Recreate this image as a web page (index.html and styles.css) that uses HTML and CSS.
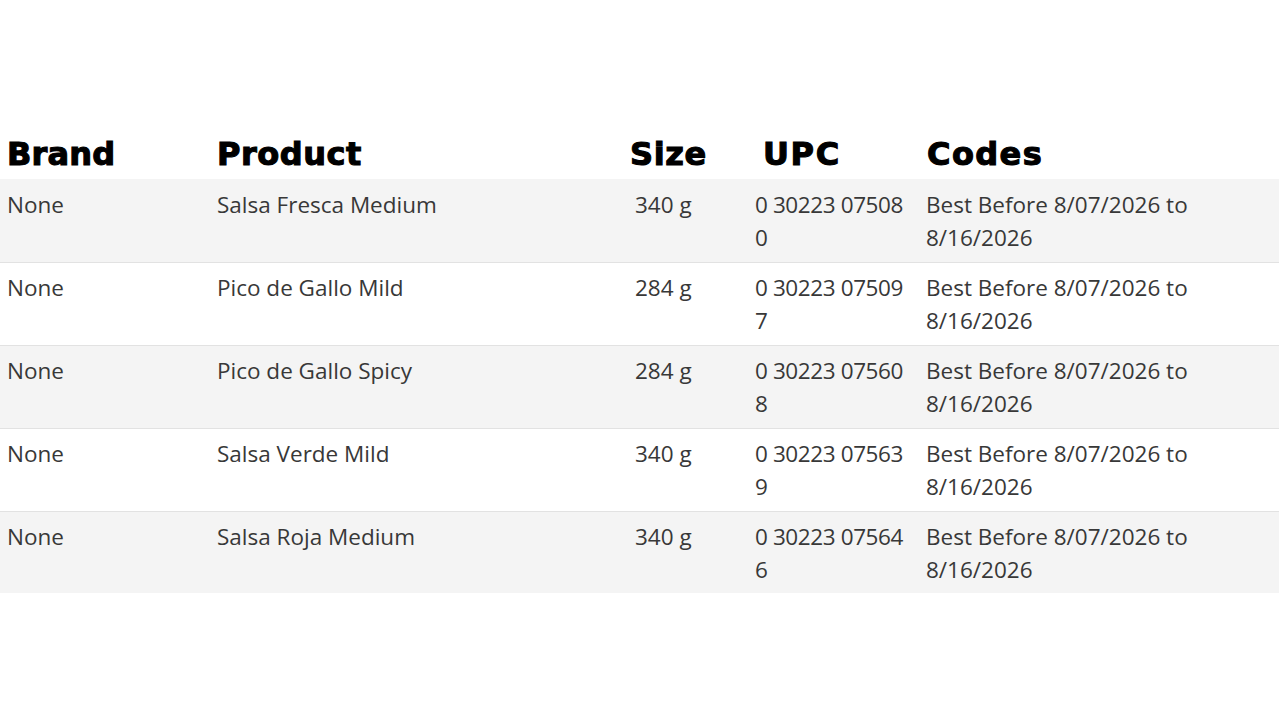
FILE: index.html
```html
<!DOCTYPE html>
<html lang="en">
<head>
<meta charset="utf-8">
<title>Recall products</title>
<link rel="stylesheet" href="styles.css">
</head>
<body>
<main class="page">
  <table class="products">
    <colgroup>
      <col class="c-brand">
      <col class="c-product">
      <col class="c-size">
      <col class="c-upc">
      <col class="c-codes">
    </colgroup>
    <thead>
      <tr>
        <th class="h-brand">Brand</th>
        <th class="h-product">Product</th>
        <th class="h-size">Size</th>
        <th class="h-upc">UPC</th>
        <th class="h-codes">Codes</th>
      </tr>
    </thead>
    <tbody>
      <tr class="odd">
        <td>None</td>
        <td>Salsa Fresca Medium</td>
        <td>340 g</td>
        <td>0 30223 07508 0</td>
        <td>Best Before 8/07/2026 to 8/16/2026</td>
      </tr>
      <tr>
        <td>None</td>
        <td>Pico de Gallo Mild</td>
        <td>284 g</td>
        <td>0 30223 07509 7</td>
        <td>Best Before 8/07/2026 to 8/16/2026</td>
      </tr>
      <tr class="odd">
        <td>None</td>
        <td>Pico de Gallo Spicy</td>
        <td>284 g</td>
        <td>0 30223 07560 8</td>
        <td>Best Before 8/07/2026 to 8/16/2026</td>
      </tr>
      <tr>
        <td>None</td>
        <td>Salsa Verde Mild</td>
        <td>340 g</td>
        <td>0 30223 07563 9</td>
        <td>Best Before 8/07/2026 to 8/16/2026</td>
      </tr>
      <tr class="odd">
        <td>None</td>
        <td>Salsa Roja Medium</td>
        <td>340 g</td>
        <td>0 30223 07564 6</td>
        <td>Best Before 8/07/2026 to 8/16/2026</td>
      </tr>
    </tbody>
  </table>
</main>
</body>
</html>
```

FILE: styles.css
```css
html, body {
  margin: 0;
  padding: 0;
  background: #ffffff;
}

.page {
  padding-top: 134px;
}

.products {
  width: 1279px;
  border-collapse: collapse;
  table-layout: fixed;
  font-family: "Open Sans", "Liberation Sans", sans-serif;
  font-size: 22.5px;
  line-height: 33px;
  color: #383838;
}

.c-brand { width: 210px; }
.c-product { width: 418px; }
.c-size { width: 120px; }
.c-upc { width: 171px; }
.c-codes { width: 360px; }

.products th {
  font-family: "DejaVu Sans", "Liberation Sans", sans-serif;
  font-weight: bold;
  font-size: 32px;
  line-height: 40px;
  letter-spacing: 0.6px;
  color: #000;
  -webkit-text-stroke: 1.1px #000;
  text-align: left;
  padding: 0 0 5px 7px;
  vertical-align: bottom;
}

.products th.h-brand { letter-spacing: 0.2px; }
.products th.h-product { letter-spacing: 0.5px; }
.products th.h-size { padding-left: 2px; }
.products th.h-upc { padding-left: 15px; letter-spacing: 1.6px; }
.products th.h-codes { padding-left: 8px; letter-spacing: 1.4px; }

.products td {
  padding: 8px 7px 8px 7px;
  vertical-align: top;
  font-weight: normal;
}

.products td:nth-child(4) {
  letter-spacing: -0.4px;
}

.products tbody tr {
  border-top: 1px solid #e2e2e2;
}

.products tbody tr:first-child {
  border-top: 0;
}

.products tbody tr:first-child td {
  padding-top: 9px;
}

.products tbody tr:last-child td {
  padding-bottom: 7px;
}

.products tr.odd {
  background: #f4f4f4;
}
```
